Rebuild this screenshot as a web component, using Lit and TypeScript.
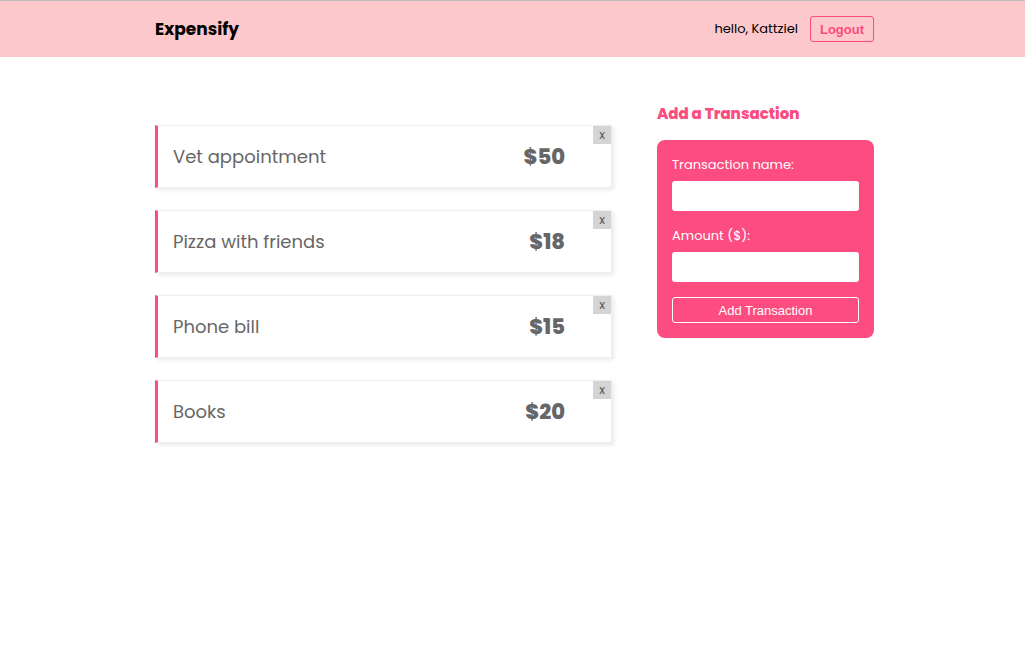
import { LitElement, html, css } from "lit";
import { customElement, state } from "lit/decorators.js";

interface Transaction {
  name: string;
  amount: number;
}

@customElement("app-root")
export class AppRoot extends LitElement {
  @state() private transactions: Transaction[] = [
    { name: "Vet appointment", amount: 50 },
    { name: "Pizza with friends", amount: 18 },
    { name: "Phone bill", amount: 15 },
    { name: "Books", amount: 20 },
  ];

  static styles = css`
    :host {
      display: block;
      min-height: 100vh;
      background: #fff;
      color: #000;
      font-family: Poppins, Inter, sans-serif;
      font-size: 13px;
      line-height: 20px;
    }
    * {
      box-sizing: border-box;
    }
    .nav {
      display: flex;
      align-items: center;
      gap: 12px;
      padding: 15px 151px 15px 155px;
      border-top: 1px solid #bebebe;
      background: #fdc8cb;
    }
    .logo {
      margin-right: auto;
      font-size: 17px;
      font-weight: 700;
    }
    .btn {
      height: 26px;
      padding: 0 9px;
      border: 1px solid currentColor;
      border-radius: 3px;
      background: transparent;
      font-family: "Liberation Sans", sans-serif;
      font-size: 13px;
      cursor: pointer;
    }
    .logout {
      color: #fc4c80;
      font-weight: 700;
    }
    .home {
      display: grid;
      grid-template-columns: minmax(0, 1fr) 217px;
      align-items: start;
      gap: 45px;
      padding: 46px 151px 40px 155px;
    }
    .list {
      display: flex;
      flex-direction: column;
      gap: 22px;
      margin: 22px 0 0;
      padding: 0;
      list-style: none;
    }
    .card {
      display: flex;
      align-items: center;
      gap: 28px;
      min-height: 63px;
      padding-left: 15px;
      border: 1px solid #eee;
      border-left: 3px solid #fc4c80;
      box-shadow: 2px 2px 4px rgba(50, 50, 50, 0.1);
      color: #666;
    }
    .name {
      flex: 1;
      margin: 0;
      font-size: 18px;
      line-height: 28px;
    }
    .amount {
      margin: 0;
      font-size: 21px;
      font-weight: 800;
      line-height: 28px;
    }
    .delete {
      align-self: flex-start;
      width: 18px;
      height: 18px;
      padding: 0;
      border: 0;
      background: #d4d4d4;
      color: #555;
      font: 400 12px/18px Poppins, Inter, sans-serif;
      cursor: pointer;
    }
    .title {
      margin: 0 0 15px;
      color: #fc4c80;
      font-size: 15px;
      font-weight: 800;
      line-height: 22px;
    }
    .form {
      display: flex;
      flex-direction: column;
      gap: 15px;
      padding: 15px;
      border-radius: 8px;
      background: #fc4c80;
      color: #fff;
    }
    .field {
      display: flex;
      flex-direction: column;
      gap: 7px;
    }
    .label {
      line-height: 19px;
    }
    .input {
      width: 100%;
      height: 30px;
      padding: 0 8px;
      border: 0;
      border-radius: 3px;
      background: #fff;
      font: inherit;
    }
    .submit {
      color: #fff;
    }
    @media (max-width: 800px) {
      .nav,
      .home {
        padding-left: 20px;
        padding-right: 20px;
      }
      .home {
        grid-template-columns: minmax(0, 1fr);
      }
    }
  `;

  private remove(item: Transaction) {
    this.transactions = this.transactions.filter((t) => t !== item);
  }

  private add(event: SubmitEvent) {
    event.preventDefault();
    const form = event.target as HTMLFormElement;
    const data = new FormData(form);
    this.transactions = [
      { name: String(data.get("name")), amount: Number(data.get("amount")) },
      ...this.transactions,
    ];
    form.reset();
  }

  render() {
    return html`
      <nav class="nav">
        <span class="logo">Expensify</span>
        <span>hello, Kattziel</span>
        <button class="btn logout" type="button">Logout</button>
      </nav>
      <main class="home">
        <ul class="list">
          ${this.transactions.map(
            (t) => html`
              <li class="card">
                <p class="name">${t.name}</p>
                <p class="amount">$${t.amount}</p>
                <button class="delete" type="button" @click=${() => this.remove(t)}>x</button>
              </li>
            `
          )}
        </ul>
        <aside>
          <h3 class="title">Add a Transaction</h3>
          <form class="form" @submit=${this.add}>
            <div class="field">
              <label class="label" for="name">Transaction name:</label>
              <input class="input" id="name" name="name" type="text" required />
            </div>
            <div class="field">
              <label class="label" for="amount">Amount ($):</label>
              <input class="input" id="amount" name="amount" type="number" required />
            </div>
            <button class="btn submit" type="submit">Add Transaction</button>
          </form>
        </aside>
      </main>
    `;
  }
}
